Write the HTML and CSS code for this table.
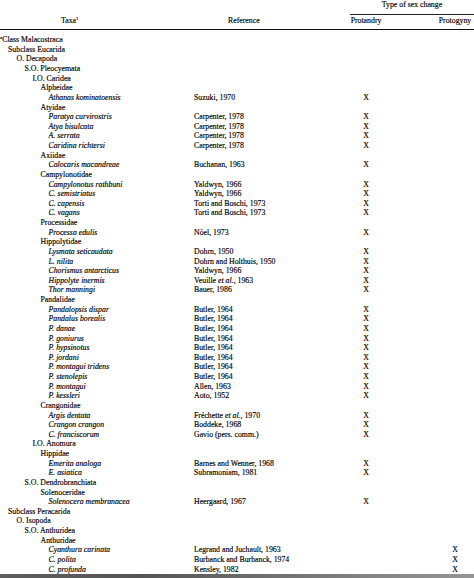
FILE: index.html
```html
<!DOCTYPE html>
<html>
<head>
<meta charset="utf-8">
<link rel="stylesheet" href="styles.css">
</head>
<body>
<div class="page">
  <div class="hrow top">
    <div class="span-type">Type of sex change</div>
  </div>
  <div class="hrow heads">
    <div class="h-taxa">Taxa<sup>1</sup></div>
    <div class="h-ref">Reference</div>
    <div class="h-pa">Protandry</div>
    <div class="h-pg">Protogyny</div>
  </div>
  <div class="rows">
    <div class="row"><div class="t l0"><sup class="fn">a</sup>Class Malacostraca</div><div></div><div></div><div></div></div>
    <div class="row"><div class="t l1">Subclass Eucarida</div><div></div><div></div><div></div></div>
    <div class="row"><div class="t l2">O. Decapoda</div><div></div><div></div><div></div></div>
    <div class="row"><div class="t l3">S.O. Pleocyemata</div><div></div><div></div><div></div></div>
    <div class="row"><div class="t l4">I.O. Caridea</div><div></div><div></div><div></div></div>
    <div class="row"><div class="t l5">Alpheidae</div><div></div><div></div><div></div></div>
    <div class="row"><div class="t l6 sp">Athanas kominatoensis</div><div class="r">Suzuki, 1970</div><div class="x">X</div><div class="y"></div></div>
    <div class="row"><div class="t l5">Atyidae</div><div></div><div></div><div></div></div>
    <div class="row"><div class="t l6 sp">Paratya curvirostris</div><div class="r">Carpenter, 1978</div><div class="x">X</div><div class="y"></div></div>
    <div class="row"><div class="t l6 sp">Atya bisulcata</div><div class="r">Carpenter, 1978</div><div class="x">X</div><div class="y"></div></div>
    <div class="row"><div class="t l6 sp">A. serrata</div><div class="r">Carpenter, 1978</div><div class="x">X</div><div class="y"></div></div>
    <div class="row"><div class="t l6 sp">Caridina richtersi</div><div class="r">Carpenter, 1978</div><div class="x">X</div><div class="y"></div></div>
    <div class="row"><div class="t l5">Axiidae</div><div></div><div></div><div></div></div>
    <div class="row"><div class="t l6 sp">Calocaris macandreae</div><div class="r">Buchanan, 1963</div><div class="x">X</div><div class="y"></div></div>
    <div class="row"><div class="t l5">Campylonotidae</div><div></div><div></div><div></div></div>
    <div class="row"><div class="t l6 sp">Campylonotus rathbuni</div><div class="r">Yaldwyn, 1966</div><div class="x">X</div><div class="y"></div></div>
    <div class="row"><div class="t l6 sp">C. semistriatus</div><div class="r">Yaldwyn, 1966</div><div class="x">X</div><div class="y"></div></div>
    <div class="row"><div class="t l6 sp">C. capensis</div><div class="r">Torti and Boschi, 1973</div><div class="x">X</div><div class="y"></div></div>
    <div class="row"><div class="t l6 sp">C. vagans</div><div class="r">Torti and Boschi, 1973</div><div class="x">X</div><div class="y"></div></div>
    <div class="row"><div class="t l5">Processidae</div><div></div><div></div><div></div></div>
    <div class="row"><div class="t l6 sp">Processa edulis</div><div class="r">Nöel, 1973</div><div class="x">X</div><div class="y"></div></div>
    <div class="row"><div class="t l5">Hippolytidae</div><div></div><div></div><div></div></div>
    <div class="row"><div class="t l6 sp">Lysmata seticaudata</div><div class="r">Dohrn, 1950</div><div class="x">X</div><div class="y"></div></div>
    <div class="row"><div class="t l6 sp">L. nilita</div><div class="r">Dohrn and Holthuis, 1950</div><div class="x">X</div><div class="y"></div></div>
    <div class="row"><div class="t l6 sp">Chorismus antarcticus</div><div class="r">Yaldwyn, 1966</div><div class="x">X</div><div class="y"></div></div>
    <div class="row"><div class="t l6 sp">Hippolyte inermis</div><div class="r">Veuille <i>et al.</i>, 1963</div><div class="x">X</div><div class="y"></div></div>
    <div class="row"><div class="t l6 sp">Thor manningi</div><div class="r">Bauer, 1986</div><div class="x">X</div><div class="y"></div></div>
    <div class="row"><div class="t l5">Pandalidae</div><div></div><div></div><div></div></div>
    <div class="row"><div class="t l6 sp">Pandalopsis dispar</div><div class="r">Butler, 1964</div><div class="x">X</div><div class="y"></div></div>
    <div class="row"><div class="t l6 sp">Pandalus borealis</div><div class="r">Butler, 1964</div><div class="x">X</div><div class="y"></div></div>
    <div class="row"><div class="t l6 sp">P. danae</div><div class="r">Butler, 1964</div><div class="x">X</div><div class="y"></div></div>
    <div class="row"><div class="t l6 sp">P. goniurus</div><div class="r">Butler, 1964</div><div class="x">X</div><div class="y"></div></div>
    <div class="row"><div class="t l6 sp">P. hypsinotus</div><div class="r">Butler, 1964</div><div class="x">X</div><div class="y"></div></div>
    <div class="row"><div class="t l6 sp">P. jordani</div><div class="r">Butler, 1964</div><div class="x">X</div><div class="y"></div></div>
    <div class="row"><div class="t l6 sp">P. montagui tridens</div><div class="r">Butler, 1964</div><div class="x">X</div><div class="y"></div></div>
    <div class="row"><div class="t l6 sp">P. stenolepis</div><div class="r">Butler, 1964</div><div class="x">X</div><div class="y"></div></div>
    <div class="row"><div class="t l6 sp">P. montagui</div><div class="r">Allen, 1963</div><div class="x">X</div><div class="y"></div></div>
    <div class="row"><div class="t l6 sp">P. kessleri</div><div class="r">Aoto, 1952</div><div class="x">X</div><div class="y"></div></div>
    <div class="row"><div class="t l5">Crangonidae</div><div></div><div></div><div></div></div>
    <div class="row"><div class="t l6 sp">Argis dentata</div><div class="r">Fréchette <i>et al.</i>, 1970</div><div class="x">X</div><div class="y"></div></div>
    <div class="row"><div class="t l6 sp">Crangon crangon</div><div class="r">Boddeke, 1968</div><div class="x">X</div><div class="y"></div></div>
    <div class="row"><div class="t l6 sp">C. franciscorum</div><div class="r">Gavio (pers. comm.)</div><div class="x">X</div><div class="y"></div></div>
    <div class="row"><div class="t l4">I.O. Anomura</div><div></div><div></div><div></div></div>
    <div class="row"><div class="t l5">Hippidae</div><div></div><div></div><div></div></div>
    <div class="row"><div class="t l6 sp">Emerita analoga</div><div class="r">Barnes and Wenner, 1968</div><div class="x">X</div><div class="y"></div></div>
    <div class="row"><div class="t l6 sp">E. asiatica</div><div class="r">Subramoniam, 1981</div><div class="x">X</div><div class="y"></div></div>
    <div class="row"><div class="t l3">S.O. Dendrobranchiata</div><div></div><div></div><div></div></div>
    <div class="row"><div class="t l5">Solenoceridae</div><div></div><div></div><div></div></div>
    <div class="row"><div class="t l6 sp">Solenocera membranacea</div><div class="r">Heergaard, 1967</div><div class="x">X</div><div class="y"></div></div>
    <div class="row"><div class="t l1">Subclass Peracarida</div><div></div><div></div><div></div></div>
    <div class="row"><div class="t l2">O. Isopoda</div><div></div><div></div><div></div></div>
    <div class="row"><div class="t l3">S.O. Anthuridea</div><div></div><div></div><div></div></div>
    <div class="row"><div class="t l5">Anthuridae</div><div></div><div></div><div></div></div>
    <div class="row"><div class="t l6 sp">Cyanthura carinata</div><div class="r">Legrand and Juchault, 1963</div><div class="x"></div><div class="y">X</div></div>
    <div class="row"><div class="t l6 sp">C. polita</div><div class="r">Burbanck and Burbanck, 1974</div><div class="x"></div><div class="y">X</div></div>
    <div class="row"><div class="t l6 sp">C. profunda</div><div class="r">Kensley, 1982</div><div class="x"></div><div class="y">X</div></div>
  </div>
  <div class="edge"></div>
</div>
</body>
</html>
```
FILE: styles.css
```css
html, body {
  margin: 0;
  padding: 0;
  background: #ffffff;
  overflow: hidden;
}
.page {
  width: 474px;
  height: 578px;
  font-family: "Liberation Serif", "Times New Roman", serif;
  font-size: 7.8px;
  color: #000;
  -webkit-text-stroke: 0.15px #000;
  display: flex;
  flex-direction: column;
}
.hrow,
.row {
  display: grid;
  grid-template-columns: 194px 146px 52px 82px;
  white-space: nowrap;
}
.top {
  line-height: 9px;
}
.span-type {
  grid-column: 3 / 5;
  margin-left: 10px;
  text-align: center;
  padding-bottom: 4.5px;
  border-bottom: 1px solid #222;
}
.heads {
  margin-top: 1.7px;
  line-height: 9.6px;
  padding-bottom: 3px;
  border-bottom: 1.6px solid #111;
}
.h-taxa {
  padding-left: 61px;
}
.h-ref {
  padding-left: 34px;
}
.h-pa {
  text-align: center;
}
.h-pg {
  padding-left: 44px;
  text-align: center;
}
sup {
  font-size: 4.5px;
  vertical-align: 3px;
  line-height: 0;
}
.fn {
  font-size: 5px;
}
.rows {
  padding-top: 5.4px;
}
.row {
  line-height: 9.63px;
  height: 9.63px;
}
.t.sp {
  font-style: italic;
}
.r i {
  font-style: italic;
}
.x {
  text-align: center;
}
.y {
  padding-left: 44px;
  text-align: center;
}
.l0 { padding-left: 0; }
.l1 { padding-left: 8px; }
.l2 { padding-left: 16.5px; }
.l3 { padding-left: 24.5px; }
.l4 { padding-left: 32.5px; }
.l5 { padding-left: 40.5px; }
.l6 { padding-left: 48.5px; }
.edge {
  flex: 1;
  min-height: 3px;
  background: linear-gradient(90deg, #5e5e5e 0%, #555 30%, #6e6e6e 55%, #858585 80%, #959595 100%);
}
```
